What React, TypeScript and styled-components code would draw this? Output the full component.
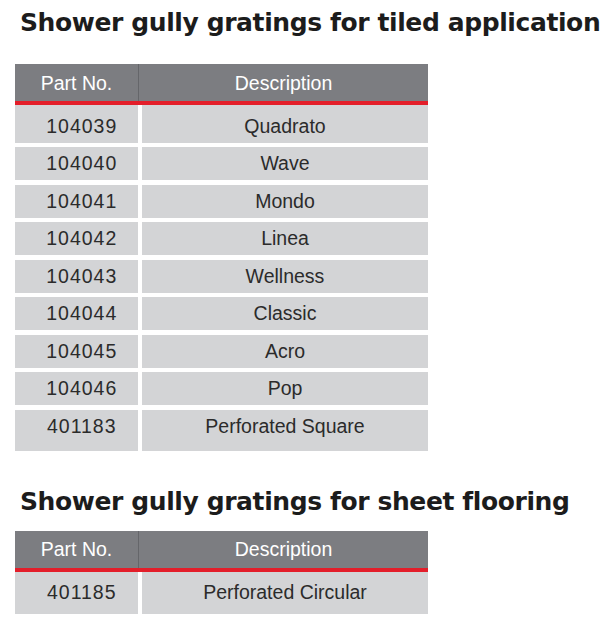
import React from "react";
import styled, { createGlobalStyle } from "styled-components";

const GlobalStyle = createGlobalStyle`
  html, body {
    margin: 0;
    padding: 0;
    background: #ffffff;
  }
`;

const Page = styled.div`
  width: 610px;
  padding: 8px 0 0 15px;
  box-sizing: border-box;
`;

type HeadingType = {
  $gap: number;
};

const Heading = styled.h2<HeadingType>`
  margin: 0 0 ${({ $gap }) => $gap}px 5px;
  font-family: "DejaVu Sans", sans-serif;
  font-weight: bold;
  font-size: 25px;
  line-height: 30px;
  letter-spacing: -0.4px;
  color: #1c1c1c;
  white-space: nowrap;
`;

const Table = styled.div`
  width: 413px;
  margin-bottom: 36px;
  font-family: "Liberation Sans", Arial, sans-serif;
  font-size: 19.5px;
`;

const HeadRow = styled.div`
  display: grid;
  grid-template-columns: 124px 1fr;
  height: 37px;
  background: #7c7d81;
  border-bottom: 4.5px solid #e31e2a;
  color: #ffffff;
`;

const HeadCell = styled.div`
  display: flex;
  align-items: center;
  justify-content: center;
  padding-top: 1px;

  &:first-child {
    border-right: 1px solid #65666a;
  }
`;

const Row = styled.div`
  display: grid;
  grid-template-columns: 122.5px 1fr;
  column-gap: 4.5px;
  margin-top: 4.5px;

  &:first-child {
    margin-top: 0;
  }
`;

type CellType = {
  $num?: boolean;
};

const Cell = styled.div<CellType>`
  display: flex;
  align-items: center;
  justify-content: center;
  height: 33px;
  background: #d3d4d6;
  color: #2b2b2b;
  padding-left: ${({ $num }) => ($num ? "11px" : "0")};
  letter-spacing: ${({ $num }) => ($num ? "1px" : "0")};

  ${Row}:first-child > & {
    height: 37.5px;
    padding-top: 4.5px;
    box-sizing: border-box;
  }

  ${Row}:last-child > & {
    height: 41px;
    padding-bottom: 7px;
    box-sizing: border-box;
  }

  ${Row}:first-child:last-child > & {
    height: 42.5px;
    padding-top: 4px;
    padding-bottom: 4px;
  }
`;

type Item = [string, string];

const tiled: Item[] = [
  ["104039", "Quadrato"],
  ["104040", "Wave"],
  ["104041", "Mondo"],
  ["104042", "Linea"],
  ["104043", "Wellness"],
  ["104044", "Classic"],
  ["104045", "Acro"],
  ["104046", "Pop"],
  ["401183", "Perforated Square"],
];

const sheet: Item[] = [["401185", "Perforated Circular"]];

function PartsTable({ items }: { items: Item[] }) {
  return (
    <Table>
      <HeadRow>
        <HeadCell>Part No.</HeadCell>
        <HeadCell>Description</HeadCell>
      </HeadRow>
      <div>
        {items.map(([part, desc]) => (
          <Row key={part}>
            <Cell $num>{part}</Cell>
            <Cell>{desc}</Cell>
          </Row>
        ))}
      </div>
    </Table>
  );
}

function App() {
  return (
    <Page>
      <GlobalStyle />
      <Heading $gap={26}>Shower gully gratings for tiled application</Heading>
      <PartsTable items={tiled} />
      <Heading $gap={14}>Shower gully gratings for sheet flooring</Heading>
      <PartsTable items={sheet} />
    </Page>
  );
}

export default App;
